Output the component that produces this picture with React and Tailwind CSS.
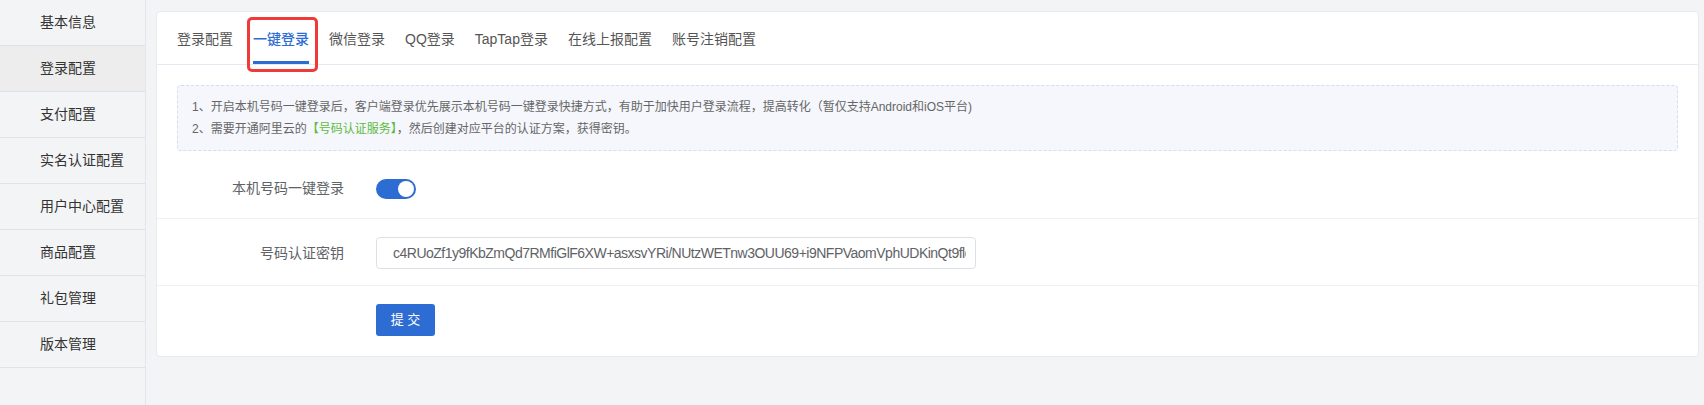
import React from "react";

const menu = ["基本信息", "登录配置", "支付配置", "实名认证配置", "用户中心配置", "商品配置", "礼包管理", "版本管理"];
const tabs = ["登录配置", "一键登录", "微信登录", "QQ登录", "TapTap登录", "在线上报配置", "账号注销配置"];

function Sidebar() {
  return (
    <div className="w-[146px] shrink-0 h-[405px] bg-[#f3f4f6] border-r border-[#e2e5ec]">
      {menu.map((m, i) => (
        <div
          key={m}
          className={`h-[46px] flex items-center pl-10 border-b border-[#e1e2e5] text-[14px] text-[#333] ${i === 1 ? "bg-[#ededee]" : ""}`}
        >
          {m}
        </div>
      ))}
    </div>
  );
}

function Tabs() {
  return (
    <div className="flex gap-5 px-5 h-[53px] border-b border-[#e6e9f1]">
      {tabs.map((t, i) => (
        <div
          key={t}
          className={`relative h-[52px] pt-[3px] flex items-center text-[14px] ${i === 1 ? "text-[#2d6cd2] font-medium" : "text-[#555]"}`}
        >
          {t}
          {i === 1 && (
            <>
              <span className="absolute left-0 right-0 top-[49px] h-[3px] bg-[#2d6cd2]" />
              {/* annotation box from the screenshot */}
              <span className="absolute -left-[6px] -right-[9px] top-[5px] -bottom-[8px] border-[3px] border-[#f03a3a] rounded-[5px]" />
            </>
          )}
        </div>
      ))}
    </div>
  );
}

export default function App() {
  return (
    <div className="flex w-[1704px] h-[405px] bg-[#f3f4f6] font-['Liberation_Sans','Noto_Sans_CJK_SC',sans-serif] overflow-hidden">
      <Sidebar />
      <div className="flex-1 pl-[10px] pr-[5px] pt-[11px]">
        <div className="bg-white border border-[#e8eaf0] rounded-[4px]">
          <Tabs />

          <div className="px-5 pt-5">
            <div className="border border-dashed border-[#d9dcef] bg-[#f5f7fc] rounded-[4px] px-[14px] py-[10px] text-[12px] leading-[22px] text-[#666]">
              <p>1、开启本机号码一键登录后，客户端登录优先展示本机号码一键登录快捷方式，有助于加快用户登录流程，提高转化（暂仅支持Android和iOS平台)</p>
              <p>
                2、需要开通阿里云的<span className="text-[#5dbb3c]">【号码认证服务】</span>，然后创建对应平台的认证方案，获得密钥。
              </p>
            </div>
          </div>

          <div className="h-[68px] flex items-center pt-[8px] border-b border-[#eef0f4]">
            <div className="w-[187px] text-right text-[14px] text-[#606266]">本机号码一键登录</div>
            <div className="ml-8 w-10 h-5 rounded-full bg-[#2d6cd2] flex items-center justify-end px-[2px]">
              <span className="w-4 h-4 rounded-full bg-white" />
            </div>
          </div>

          <div className="h-[67px] flex items-center pt-[2px] border-b border-[#eef0f4]">
            <div className="w-[187px] text-right text-[14px] text-[#606266]">号码认证密钥</div>
            <input
              readOnly
              value="c4RUoZf1y9fKbZmQd7RMfiGlF6XW+asxsvYRi/NUtzWETnw3OUU69+i9NFPVaomVphUDKinQt9flcXk2"
              className="ml-8 w-[600px] h-8 border border-[#dcdfe6] rounded-[4px] pl-4 pr-[9px] text-[14px] tracking-[-0.5px] text-[#606266] outline-none"
            />
          </div>

          <div className="pt-[18px] pb-5 pl-[219px]">
            <button className="w-[59px] h-8 bg-[#2d6cd2] rounded-[3px] text-white text-[13px]">提 交</button>
          </div>
        </div>
      </div>
    </div>
  );
}
